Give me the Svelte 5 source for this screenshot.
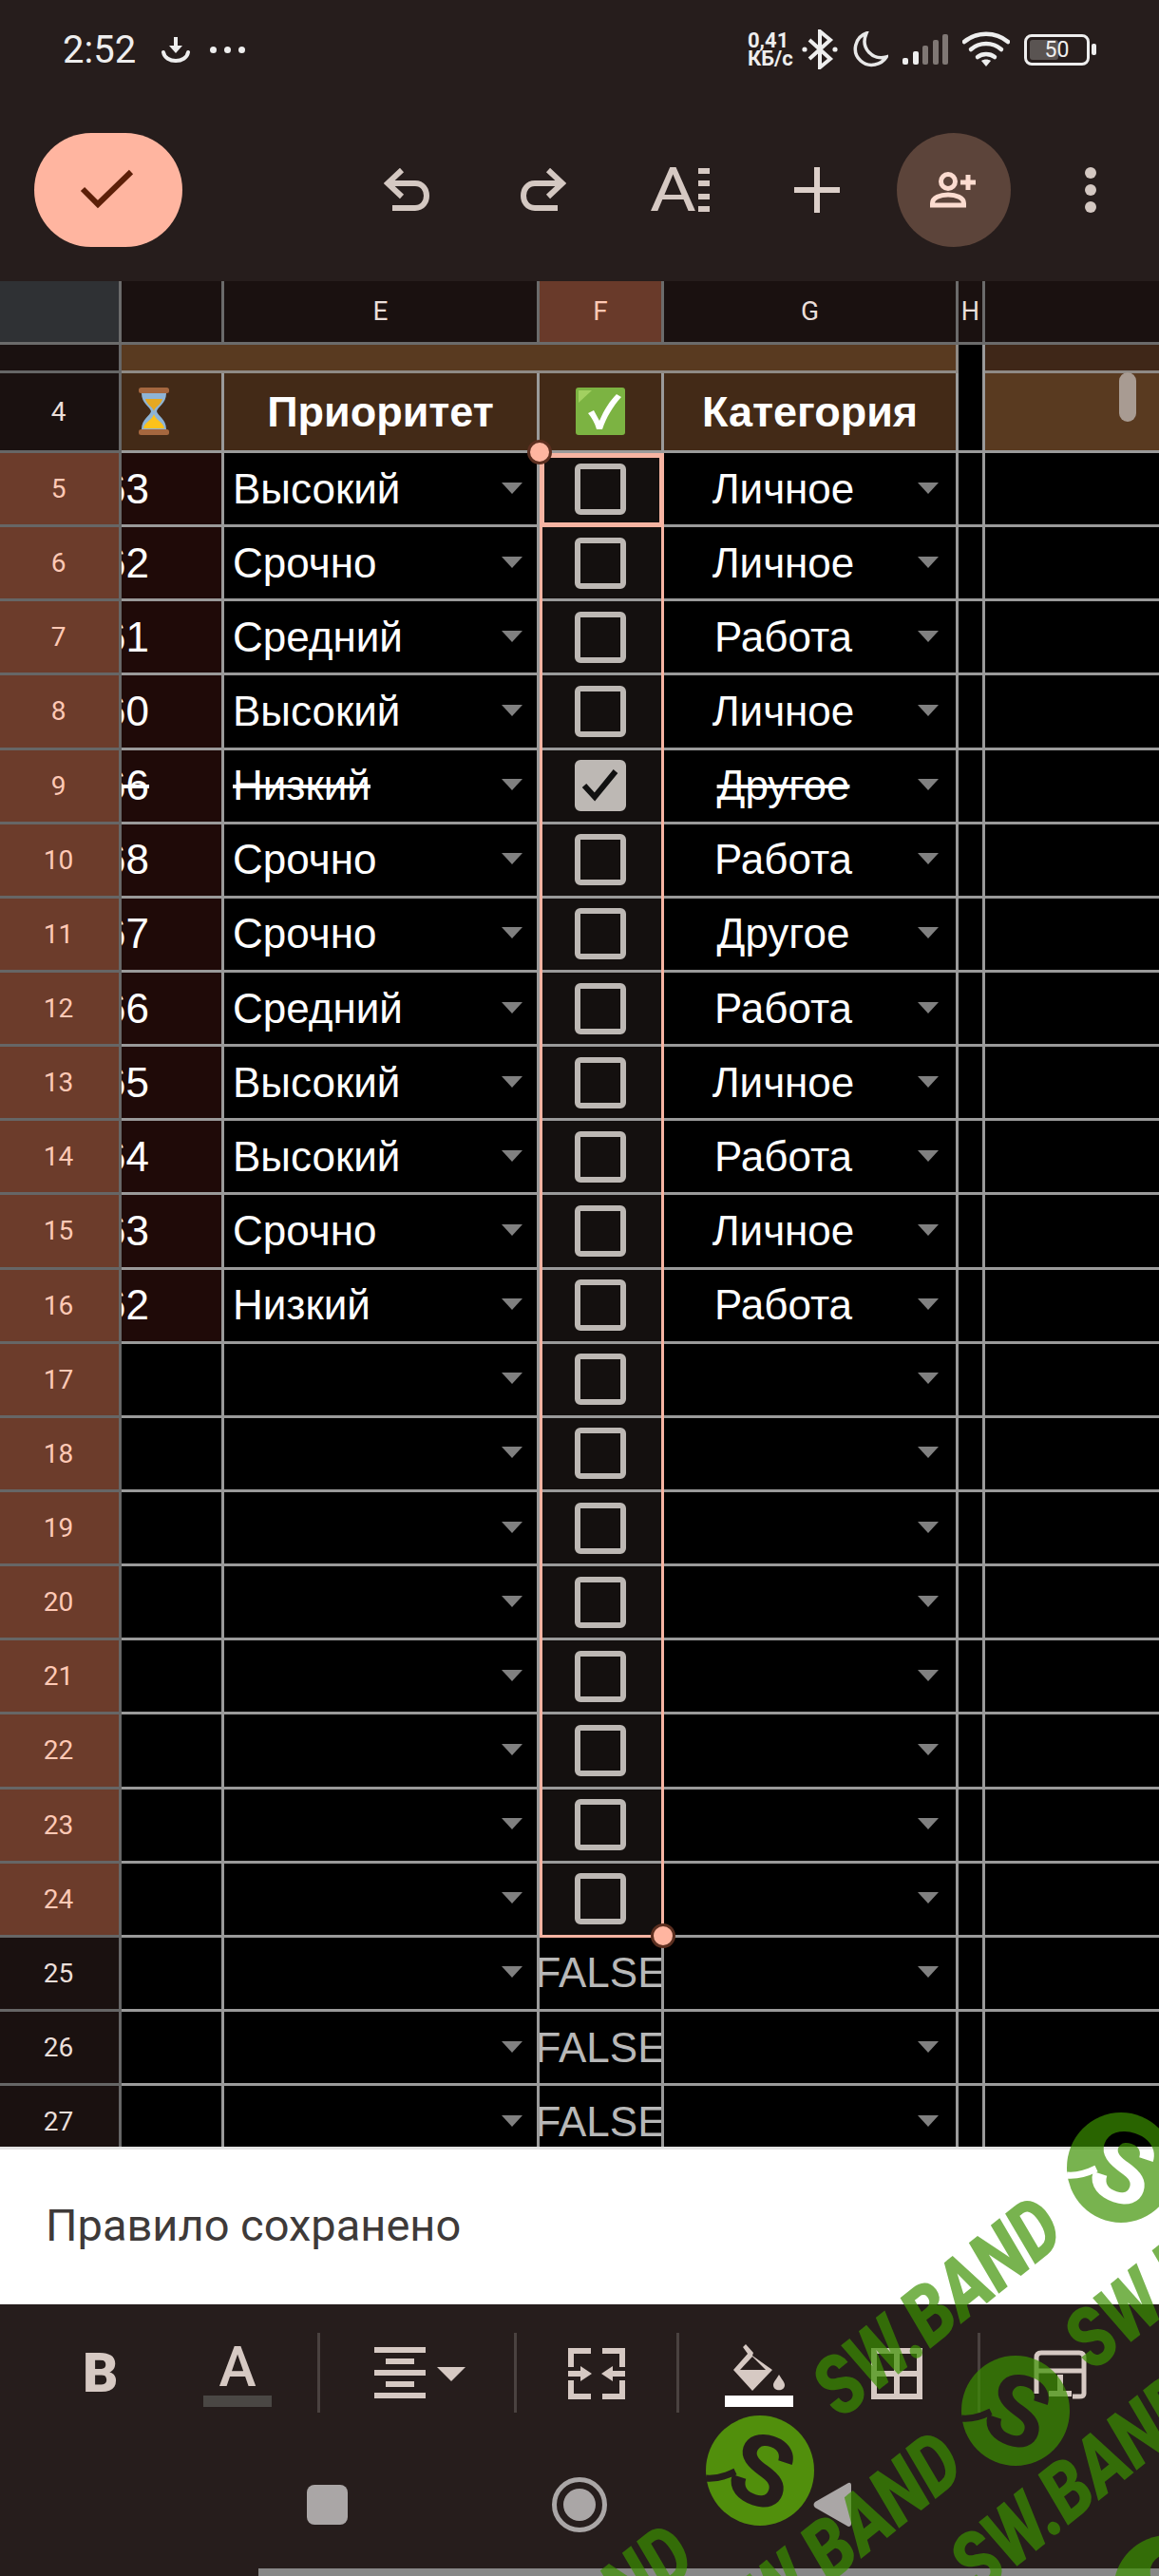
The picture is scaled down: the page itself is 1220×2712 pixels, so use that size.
<script lang="ts">
  const priority = ['Высокий', 'Срочно', 'Средний', 'Высокий', 'Низкий', 'Срочно', 'Срочно', 'Средний', 'Высокий', 'Высокий', 'Срочно', 'Низкий'];
  const category = ['Личное', 'Личное', 'Работа', 'Личное', 'Другое', 'Работа', 'Другое', 'Работа', 'Личное', 'Работа', 'Личное', 'Работа'];
  const days = ['63', '62', '61', '60', '66', '68', '67', '66', '65', '64', '63', '62'];

  const rows = Array.from({ length: 23 }, (_, i) => {
    const n = i + 5;
    const k = i < 12 ? i : -1;
    return {
      n,
      selected: n <= 24,
      done: n === 9,
      day: k >= 0 ? days[k] : '',
      priority: k >= 0 ? priority[k] : '',
      category: k >= 0 ? category[k] : ''
    };
  });

  // watermark: baseline start of each "SW.BAND" strip
  const strips = [
    { x: 885, y: 2548 },
    { x: 1150, y: 2498 },
    { x: 780, y: 2795 },
    { x: 497, y: 2893 },
    { x: 1030, y: 2734 }
  ];
  const logos = [
    { x: 1180, y: 2282, solid: false },
    { x: 800, y: 2601, solid: true },
    { x: 1069, y: 2538, solid: false },
    { x: 1229, y: 2727, solid: false }
  ];
</script>

<div class="screen">
  <header class="top">
    <div class="status">
      <div class="status-left">
        <span class="time">2:52</span>
        <svg class="ic-dl" viewBox="0 0 30 28" width="30" height="28" fill="none" stroke="#eee" stroke-width="4">
          <path d="M15 1v12" />
          <path d="M8 10h14l-7 8z" fill="#eee" stroke="none" />
          <path d="M2 17c2 12 24 12 26 0" stroke-linecap="round" />
        </svg>
        <span class="dots"><i></i><i></i><i></i></span>
      </div>
      <div class="status-right">
        <span class="speed">0,41<br />КБ/с</span>
        <svg viewBox="0 0 38 42" width="38" height="42" fill="none" stroke="#eee" stroke-width="4">
          <path d="M8 11l22 20-11 9V2l11 9L8 31" />
          <circle cx="3" cy="21" r="2.6" fill="#eee" stroke="none" />
          <circle cx="35" cy="21" r="2.6" fill="#eee" stroke="none" />
        </svg>
        <svg viewBox="0 0 38 38" width="38" height="38" fill="none" stroke="#e8e8e8" stroke-width="3.5">
          <path d="M15 2C3 6-1 22 9 31c9 8 22 4 27-4C22 31 8 18 15 2z" />
        </svg>
        <svg viewBox="0 0 48 32" width="48" height="32">
          <rect x="0" y="25" width="6" height="7" rx="2" fill="#eee" />
          <rect x="11" y="18" width="6" height="14" rx="2" fill="#eee" />
          <rect x="21" y="12" width="6" height="20" rx="2" fill="#7f7774" />
          <rect x="32" y="6" width="6" height="26" rx="2" fill="#7f7774" />
          <rect x="42" y="0" width="6" height="32" rx="2" fill="#7f7774" />
        </svg>
        <svg viewBox="0 0 50 38" width="50" height="38" fill="none" stroke="#eee" stroke-width="4.5" stroke-linecap="round">
          <path d="M2 11c13-11 33-11 46 0" />
          <path d="M9 19c9-8 23-8 32 0" />
          <path d="M16 27c5-4 13-4 18 0" />
          <path d="M20 31l5 6 5-6c-3-2-7-2-10 0z" fill="#eee" stroke="none" />
        </svg>
        <div class="battery">
          <div class="cell-body"><i></i><span>50</span></div>
          <b></b>
        </div>
      </div>
    </div>

    <div class="toolbar">
      <button class="confirm" aria-label="Готово">
        <svg viewBox="0 0 60 44" width="60" height="44" fill="none" stroke="#5c1f08" stroke-width="6">
          <path d="M3 21l16 16L54 3" />
        </svg>
      </button>
      <div class="actions">
        <span class="act">
          <svg viewBox="0 0 48 46" width="48" height="46" fill="none" stroke="#d4c8c2" stroke-width="6">
            <path d="M19 2L4 16l15 14" />
            <path d="M4 16h29c16 0 16 26 0 26H9" />
          </svg>
        </span>
        <span class="act">
          <svg class="flip" viewBox="0 0 48 46" width="48" height="46" fill="none" stroke="#d4c8c2" stroke-width="6">
            <path d="M19 2L4 16l15 14" />
            <path d="M4 16h29c16 0 16 26 0 26H9" />
          </svg>
        </span>
        <span class="act">
          <span class="format"><span class="format-a">A</span><span class="format-lines"><i></i><i></i><i></i><i></i></span></span>
        </span>
        <span class="act">
          <svg viewBox="0 0 48 48" width="48" height="48" fill="#dccfc9"><rect x="21" width="6" height="48" /><rect y="21" width="48" height="6" /></svg>
        </span>
        <span class="act share">
          <svg viewBox="0 0 50 38" width="50" height="38" fill="none" stroke="#fcdcd0" stroke-width="5">
            <circle cx="19" cy="10" r="7.5" />
            <path d="M2.5 35v-2c0-12 33-12 33 0v2z" />
            <path d="M40 3v16M32 11h16" />
          </svg>
        </span>
        <span class="act kebab"><i></i><i></i><i></i></span>
      </div>
    </div>
  </header>

  <main class="sheet">
    <div class="row col-head">
      <div class="hd corner"></div>
      <div class="hd"></div>
      <div class="hd">E</div>
      <div class="hd on">F</div>
      <div class="hd">G</div>
      <div class="hd narrow">H</div>
      <div class="hd end"></div>
    </div>

    <div class="row band">
      <div class="rn"></div>
      <div class="band-fill"></div>
      <div class="gap"></div>
      <div class="band-end"></div>
    </div>

    <div class="row title">
      <div class="rn">4</div>
      <div class="t emoji hourglass">
        <svg viewBox="0 0 34 50" width="34" height="50">
          <rect x="1" y="0" width="32" height="6" rx="2.5" fill="#a5673f" />
          <rect x="1" y="44" width="32" height="6" rx="2.5" fill="#a5673f" />
          <path d="M4 6h26c0 11-9 14-10 19 1 5 10 8 10 19H4c0-11 9-14 10-19-1-5-10-8-10-19z" fill="#8eb4d6" />
          <path d="M8 12h18c-1 6-8 8-9 13-1-5-8-7-9-13z" fill="#e5a821" />
          <path d="M6 43c1-7 9-8 11-15 2 7 10 8 11 15z" fill="#fcc21b" />
        </svg>
      </div>
      <div class="t">Приоритет</div>
      <div class="t emoji">
        <svg viewBox="0 0 52 50" width="52" height="50">
          <rect width="52" height="50" rx="3" fill="#7cb342" />
          <path d="M3 3h14L3 16z" fill="#a2d061" />
          <path d="M13 27l6-3 6 11c5-12 11-21 18-28l5 3C39 20 32 32 28 44h-6c-2-7-5-12-9-17z" fill="#fff" />
        </svg>
      </div>
      <div class="t">Категория</div>
      <div class="gap"></div>
      <div class="t-end"></div>
    </div>

    {#each rows as r}
      <div class="row data">
        <div class="rn" class:sel={r.selected}>{r.n}</div>
        <div class="c days" class:tint={r.day} class:done={r.done}><span>{r.day}</span></div>
        <div class="c prio" class:done={r.done}><span>{r.priority}</span><i class="tri"></i></div>
        <div class="c box" class:sel={r.selected}>
          {#if r.selected}
            <span class="check" class:checked={r.done}>
              {#if r.done}
                <svg viewBox="0 0 40 36" width="40" height="36" fill="none" stroke="#111" stroke-width="6"><path d="M3 18l11 12L36 3" /></svg>
              {/if}
            </span>
          {:else}
            <span class="false">FALSE</span>
          {/if}
        </div>
        <div class="c cat" class:done={r.done}><span>{r.category}</span><i class="tri"></i></div>
        <div class="c blank"></div>
        <div class="c last"></div>
      </div>
    {/each}

    <div class="range"><div class="active"></div></div>
    <i class="handle tl"></i>
    <i class="handle br"></i>
    <i class="scroll"></i>
  </main>

  <div class="snack"><span>Правило сохранено</span></div>

  <footer class="bottom">
    <div class="fmt">
      <span class="fmt-b">B</span>
      <span class="fmt-a"><span>A</span><i></i></span>
      <i class="sep s1"></i>
      <span class="align">
        <svg viewBox="0 0 96 54" width="96" height="54" fill="#d6c9c3">
          <rect width="54" height="6" /><rect x="12" y="12" width="30" height="6" /><rect y="24" width="54" height="6" /><rect x="12" y="36" width="30" height="6" /><rect y="48" width="54" height="6" />
          <path d="M66 21h30L81 36z" />
        </svg>
      </span>
      <i class="sep s2"></i>
      <span class="wrap-ic">
        <svg viewBox="0 0 60 54" width="60" height="54" fill="#d6c9c3">
          <path d="M0 0h24v6H6v14H0zM60 0H36v6h18v14h6zM0 54h24v-6H6V34H0zM60 54H36v-6h18V34h6z" />
          <path d="M0 24h13v-5l12 8-12 8v-5H0zM60 24H47v-5l-12 8 12 8v-5h13z" />
        </svg>
      </span>
      <i class="sep s3"></i>
      <span class="fill">
        <svg viewBox="0 0 72 66" width="72" height="66">
          <path d="M22 0l8 9-1 3 21 15-21 22-20-22 15-17-5-7z" fill="#d6c9c3" />
          <path d="M29 13l14 14H16z" fill="#261d1c" />
          <path d="M57 32c3 5 6 8 6 11 0 7-12 7-12 0 0-3 3-6 6-11z" fill="#d6c9c3" />
          <rect y="54" width="72" height="12" fill="#fff" />
        </svg>
      </span>
      <span class="borders">
        <svg viewBox="0 0 54 54" width="54" height="54" fill="none" stroke="#d6c9c3" stroke-width="6">
          <path d="M3 3h48v48H3zM27 3v48M3 27h48" />
        </svg>
      </span>
      <i class="sep s4"></i>
      <span class="merge">
        <svg viewBox="0 0 56 62" width="56" height="62" fill="none" stroke="#d6c9c3" stroke-width="5">
          <path d="M3 38V8q0-5 5-5h40q5 0 5 5v38q0 3-5 3h-7M3 22h50M3 46V38" />
          <path d="M28 26v23M16 46h24" stroke-width="6" />
        </svg>
      </span>
    </div>
    <nav class="nav">
      <span class="nav-cell"><i class="nav-sq"></i></span>
      <span class="nav-cell"><i class="nav-ring"><i></i></i></span>
      <span class="nav-cell">
        <svg viewBox="0 0 40 48" width="40" height="48"><path d="M37 1q3-1 3 3v40q0 3-3 3L2 27q-3-3 0-6z" fill="#aaa6a6" /></svg>
      </span>
    </nav>
    <i class="pill"></i>
  </footer>

  <svg class="watermark" viewBox="0 0 1220 2712" width="1220" height="2712">
    <defs>
      <mask id="logo-cut" maskUnits="userSpaceOnUse" x="-60" y="-60" width="120" height="120">
        <ellipse cx="0" cy="0" rx="57" ry="58" fill="#fff" />
        <text class="logo-s" x="2" y="36" text-anchor="middle" transform="rotate(18)" fill="#000">S</text>
        <path d="M-57 8C-46 9-36 6-26 1" fill="none" stroke="#000" stroke-width="7" />
      </mask>
    </defs>
    {#each logos as l}
      <g transform="translate({l.x} {l.y})" mask="url(#logo-cut)" class:solid={l.solid} class="logo">
        <rect x="-60" y="-60" width="120" height="120" />
      </g>
    {/each}
    {#each strips as s}
      <text class="mark" transform="translate({s.x} {s.y}) rotate(-38.7) scale(1 1.2)">SW.BAND</text>
    {/each}
  </svg>
</div>

<style>
  :global(body) {
    margin: 0;
    background: #261d1c;
  }
  i {
    font-style: normal;
    display: block;
  }
  .screen {
    position: relative;
    width: 1220px;
    height: 2712px;
    overflow: hidden;
    display: flex;
    flex-direction: column;
    font-family: Roboto, sans-serif;
    background: #261d1c;
  }

  /* status bar + toolbar */
  .top {
    height: 296px;
    flex: none;
  }
  .status {
    height: 104px;
    display: flex;
    justify-content: space-between;
    align-items: center;
    padding: 0 66px;
    color: #eee;
    box-sizing: border-box;
  }
  .status-left,
  .status-right {
    display: flex;
    align-items: center;
  }
  .time {
    font-size: 40px;
    width: 104px;
  }
  .ic-dl {
    margin-right: 21px;
  }
  .dots {
    display: flex;
    gap: 8px;
  }
  .dots i {
    width: 7px;
    height: 7px;
    border-radius: 50%;
    background: #eee;
  }
  .status-right {
    gap: 15px;
  }
  .speed {
    font-size: 22px;
    font-weight: 700;
    line-height: 19px;
    width: 42px;
    white-space: nowrap;
  }
  .battery {
    display: flex;
    align-items: center;
    gap: 2px;
  }
  .cell-body {
    position: relative;
    width: 69px;
    height: 33px;
    box-sizing: border-box;
    border: 3px solid #eee;
    border-radius: 8px;
    display: flex;
    align-items: center;
    justify-content: center;
    font-size: 23px;
    color: #eee;
  }
  .cell-body i {
    position: absolute;
    left: 3px;
    top: 3px;
    bottom: 3px;
    width: 30px;
    background: #5a5452;
    border-radius: 3px;
  }
  .cell-body span {
    position: relative;
  }
  .battery b {
    width: 5px;
    height: 12px;
    border-radius: 2px;
    background: #eee;
  }
  .toolbar {
    height: 192px;
    display: flex;
    align-items: center;
    padding: 0 12px 0 36px;
  }
  .confirm {
    width: 156px;
    height: 120px;
    border: none;
    border-radius: 60px;
    background: #ffb5a0;
    display: flex;
    align-items: center;
    justify-content: center;
    padding: 0;
  }
  .actions {
    margin-left: auto;
    display: flex;
    gap: 24px;
  }
  .act {
    width: 120px;
    height: 120px;
    display: flex;
    align-items: center;
    justify-content: center;
  }
  .flip {
    transform: scaleX(-1);
  }
  .format {
    display: flex;
    align-items: center;
    width: 62px;
    height: 46px;
    position: relative;
  }
  .format-a {
    font-size: 65px;
    line-height: 46px;
    color: #d6c9c3;
    margin-left: -1px;
    display: inline-block;
    transform: scaleX(1.15);
    transform-origin: left center;
  }
  .format-lines {
    position: absolute;
    right: 0;
    top: 0;
    bottom: 0;
    display: flex;
    flex-direction: column;
    justify-content: space-between;
    align-items: flex-end;
  }
  .format-lines i {
    width: 12px;
    height: 6px;
    background: #d6c9c3;
  }
  .share {
    border-radius: 50%;
    background: #5c443a;
  }
  .kebab {
    flex-direction: column;
    gap: 6px;
  }
  .kebab i {
    width: 12px;
    height: 12px;
    border-radius: 50%;
    background: #d4c8c2;
  }

  /* sheet */
  .sheet {
    position: relative;
    height: 1964px;
    flex: none;
    overflow: hidden;
    background: #000;
    font-family: 'Liberation Sans', Arial, sans-serif;
  }
  .row {
    display: grid;
    grid-template-columns: 128px 108px 332px 131px 310px 28px 183px;
    box-sizing: border-box;
  }
  .row > div {
    box-sizing: border-box;
    min-width: 0;
  }
  .col-head {
    height: 66.5px;
  }
  .hd {
    background: #1a1110;
    color: #eadfda;
    font: 28px Roboto, sans-serif;
    display: flex;
    align-items: center;
    justify-content: center;
    border-right: 3px solid #6b6b6b;
    border-bottom: 3px solid #6b6b6b;
  }
  .hd.corner {
    background: #2f3134;
  }
  .hd.on {
    background: #693a2a;
    color: #ffc9b5;
  }
  .hd.end {
    border-right: none;
  }
  .hd.narrow {
    font-size: 27px;
    overflow: hidden;
  }
  .band {
    height: 30.5px;
    grid-template-columns: 128px 881px 28px 183px;
  }
  .rn {
    background: #1a1110;
    color: #eadfda;
    font: 28px Roboto, sans-serif;
    display: flex;
    align-items: center;
    justify-content: center;
    border-right: 3px solid #666;
    border-bottom: 3px solid #666;
    padding-right: 2px;
  }
  .rn.sel {
    background: #6c3c2b;
    color: #ffc9b5;
  }
  .band-fill {
    background: #593a20;
    border-bottom: 3px solid #8f8a85;
    border-right: 3px solid #8f8a85;
  }
  .band-end {
    background: #3f2718;
    border-bottom: 3px solid #8f8a85;
  }
  .gap {
    background: #000;
    border-right: 3px solid #9a9a9a;
  }
  .title {
    height: 84px;
  }
  .t {
    background: #432a17;
    color: #fff;
    font-size: 45px;
    font-weight: 700;
    display: flex;
    align-items: center;
    justify-content: center;
    border-right: 3px solid #9a9a9a;
    border-bottom: 3px solid #9a9a9a;
  }
  .t.emoji {
    padding-bottom: 2px;
  }
  .t.hourglass {
    justify-content: flex-start;
    padding-left: 17px;
  }
  .t-end {
    background: #593a20;
    border-bottom: 3px solid #9a9a9a;
  }
  .title .gap {
    border-bottom: 3px solid #9a9a9a;
  }
  .data {
    height: 78.15px;
  }
  .data .rn {
    border-bottom-color: #666;
  }
  .c {
    position: relative;
    display: flex;
    align-items: center;
    background: #000;
    color: #fff;
    font-size: 44px;
    border-right: 3px solid #9a9a9a;
    border-bottom: 3px solid #9a9a9a;
    overflow: hidden;
  }
  .c.last {
    border-right: none;
  }
  .c.done span {
    text-decoration: line-through;
  }
  .days {
    justify-content: flex-end;
    padding-right: 76px;
  }
  .days span {
    flex: none;
  }
  .days.tint {
    background: #1f0a08;
  }
  .prio {
    padding-left: 9px;
  }
  .cat {
    justify-content: center;
    padding-right: 56px;
  }
  .tri {
    position: absolute;
    right: 15px;
    top: 50%;
    margin-top: -7px;
    width: 0;
    height: 0;
    border-left: 11px solid transparent;
    border-right: 11px solid transparent;
    border-top: 12px solid #808080;
  }
  .cat .tri {
    right: 18px;
  }
  .box {
    justify-content: center;
  }
  .box.sel {
    background: #14100f;
  }
  .check {
    width: 54px;
    height: 54px;
    box-sizing: border-box;
    border: 6px solid #bdb8b4;
    border-radius: 6px;
    display: flex;
    align-items: center;
    justify-content: center;
  }
  .check.checked {
    background: #bdb8b4;
  }
  .false {
    flex: none;
    color: #b8b8b8;
  }
  .range {
    position: absolute;
    left: 568px;
    top: 181px;
    width: 131px;
    height: 1563px;
    box-sizing: border-box;
    border: 3px solid #f6b4a2;
  }
  .active {
    height: 78px;
    margin: -3px;
    box-sizing: border-box;
    border: 5px solid #f6b4a2;
  }
  .handle {
    position: absolute;
    width: 26px;
    height: 26px;
    box-sizing: border-box;
    border-radius: 50%;
    background: #ffb5a0;
    border: 3px solid #5c2f20;
  }
  .handle.tl {
    left: 555px;
    top: 167px;
  }
  .handle.br {
    left: 685px;
    top: 1729px;
  }
  .scroll {
    position: absolute;
    left: 1178px;
    top: 96px;
    width: 18px;
    height: 52px;
    border-radius: 9px;
    background: #a89b92;
  }

  .snack {
    height: 166px;
    flex: none;
    box-sizing: border-box;
    background: #fff;
    border-top: 3px solid #e4e4e4;
    display: flex;
    align-items: center;
    padding: 0 48px 4px;
    font-size: 47px;
    color: #3e3a39;
  }

  /* bottom formatting bar + nav */
  .bottom {
    flex: 1;
    display: flex;
    flex-direction: column;
    background: #261d1c;
  }
  .fmt {
    height: 84px;
    margin-top: 30px;
    display: flex;
    align-items: flex-start;
    color: #d6c9c3;
  }
  .fmt-b {
    font-size: 58px;
    font-weight: 900;
    line-height: 42px;
    margin: 21px 0 0 87px;
    width: 37px;
    font-family: Roboto, sans-serif;
  }
  .fmt-a {
    margin: 15px 0 0 90px;
    width: 72px;
    text-align: center;
  }
  .fmt-a span {
    display: block;
    height: 42px;
    font-size: 59px;
    font-weight: 500;
    line-height: 42px;
  }
  .fmt-a i {
    height: 12px;
    margin-top: 9px;
    background: #4a4744;
  }
  .sep {
    width: 3px;
    height: 84px;
    background: #4a4240;
  }
  .s1 {
    margin-left: 48px;
  }
  .align {
    margin: 15px 0 0 57px;
    height: 54px;
  }
  .s2 {
    margin-left: 51px;
  }
  .wrap-ic {
    margin: 16px 0 0 54px;
  }
  .s3 {
    margin-left: 54px;
  }
  .fill {
    margin: 12px 0 0 48px;
  }
  .borders {
    margin: 16px 0 0 82px;
  }
  .s4 {
    margin-left: 58px;
  }
  .merge {
    margin: 18px 0 0 56px;
  }
  .nav {
    display: flex;
    justify-content: center;
    margin-top: 61px;
    height: 72px;
  }
  .nav-cell {
    width: 266px;
    display: flex;
    align-items: center;
    justify-content: center;
  }
  .nav-sq {
    width: 43px;
    height: 42px;
    border-radius: 8px;
    background: #aaa6a6;
  }
  .nav-ring {
    width: 58px;
    height: 58px;
    box-sizing: border-box;
    border: 5px solid #aaa6a6;
    border-radius: 50%;
    display: flex;
    align-items: center;
    justify-content: center;
  }
  .nav-ring i {
    width: 34px;
    height: 34px;
    border-radius: 50%;
    background: #aaa6a6;
  }
  .pill {
    margin: auto 0 0 272px;
    height: 8px;
    background: #888;
  }

  .watermark {
    position: absolute;
    left: 0;
    top: 0;
    pointer-events: none;
  }
  .mark {
    font-family: Roboto, sans-serif;
    font-size: 72px;
    font-weight: 900;
    font-style: italic;
    fill: rgb(60, 145, 0);
    fill-opacity: 0.69;
  }
  .logo rect {
    fill: rgb(60, 145, 0);
    fill-opacity: 0.69;
  }
  .logo.solid rect {
    fill: #518f0c;
    fill-opacity: 1;
  }
  .logo-s {
    font-family: Roboto, sans-serif;
    font-size: 104px;
    font-weight: 700;
  }
</style>
